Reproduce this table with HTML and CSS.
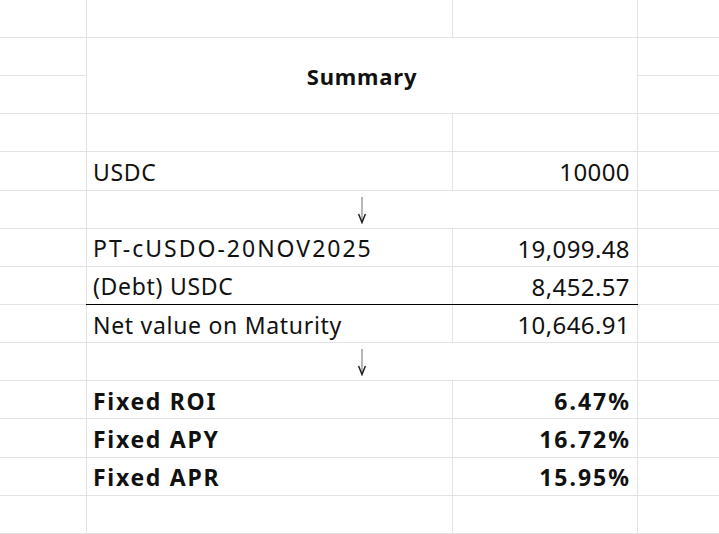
FILE: index.html
```html
<!DOCTYPE html>
<html lang="en">
<head>
<meta charset="utf-8">
<title>Summary</title>
<link rel="stylesheet" href="styles.css">
</head>
<body>
<div class="sheet">
  <!-- row 0 -->
  <div class="cell"></div><div class="cell"></div><div class="cell"></div><div class="cell"></div>
  <!-- rows 1-2 -->
  <div class="cell"></div>
  <div class="cell title span2">Summary</div>
  <div class="cell"></div>
  <div class="cell"></div>
  <div class="cell"></div>
  <!-- row 3 -->
  <div class="cell"></div><div class="cell"></div><div class="cell"></div><div class="cell"></div>
  <!-- row 4 -->
  <div class="cell"></div>
  <div class="cell label">USDC</div>
  <div class="cell num">10000</div>
  <div class="cell"></div>
  <!-- row 5 -->
  <div class="cell"></div>
  <div class="cell arrow wide"><svg width="10" height="27" viewBox="0 0 10 27"><line x1="5" y1="0" x2="5" y2="24" stroke="#999" stroke-width="1.4"/><path d="M1.6 17 L5 25.5 L8.4 17" fill="none" stroke="#222" stroke-width="1.5"/></svg></div>
  <div class="cell"></div>
  <!-- row 6 -->
  <div class="cell"></div>
  <div class="cell label code">PT-cUSDO-20NOV2025</div>
  <div class="cell num">19,099.48</div>
  <div class="cell"></div>
  <!-- row 7 -->
  <div class="cell"></div>
  <div class="cell label">(Debt) USDC</div>
  <div class="cell num">8,452.57</div>
  <div class="cell"></div>
  <!-- row 8 -->
  <div class="cell"></div>
  <div class="cell label ruled ruled-left">Net value on Maturity</div>
  <div class="cell num ruled ruled-right">10,646.91</div>
  <div class="cell"></div>
  <!-- row 9 -->
  <div class="cell"></div>
  <div class="cell arrow wide"><svg width="10" height="27" viewBox="0 0 10 27"><line x1="5" y1="0" x2="5" y2="24" stroke="#999" stroke-width="1.4"/><path d="M1.6 17 L5 25.5 L8.4 17" fill="none" stroke="#222" stroke-width="1.5"/></svg></div>
  <div class="cell"></div>
  <!-- row 10 -->
  <div class="cell"></div>
  <div class="cell label strong">Fixed ROI</div>
  <div class="cell num strong">6.47%</div>
  <div class="cell"></div>
  <!-- row 11 -->
  <div class="cell"></div>
  <div class="cell label strong">Fixed APY</div>
  <div class="cell num strong">16.72%</div>
  <div class="cell"></div>
  <!-- row 12 -->
  <div class="cell"></div>
  <div class="cell label strong">Fixed APR</div>
  <div class="cell num strong">15.95%</div>
  <div class="cell"></div>
  <!-- row 13 -->
  <div class="cell"></div><div class="cell"></div><div class="cell"></div><div class="cell"></div>
  <!-- row 14 -->
  <div class="cell"></div><div class="cell"></div><div class="cell"></div><div class="cell"></div>
</div>
</body>
</html>
```
FILE: styles.css
```css
html, body {
  margin: 0;
  padding: 0;
  overflow: hidden;
  background: #ffffff;
}

.sheet {
  display: grid;
  grid-template-columns: 86px 365px 184px 81px;
  grid-template-rows: 37px repeat(13, 37.15px) 1fr;
  gap: 1px;
  background: #e3e3e3;
  width: 719px;
  height: 534px;
  overflow: hidden;
  font-family: "Noto Sans", "DejaVu Sans", sans-serif;
  font-size: 23px;
  color: #111;
}

.cell {
  background: #ffffff;
  display: flex;
  align-items: center;
  padding: 0 6px;
  min-width: 0;
  min-height: 0;
  white-space: nowrap;
  position: relative;
}

.span2 {
  grid-row: span 2;
}

.title {
  grid-column: span 2;
  justify-content: center;
  font-weight: 700;
  font-size: 22px;
  letter-spacing: 0.8px;
  padding-top: 1px;
}

.wide {
  grid-column: span 2;
}

.arrow {
  justify-content: center;
  padding-top: 2px;
}

.label {
  letter-spacing: 0.7px;
  padding-top: 2px;
}

.code {
  letter-spacing: 2px;
}

.num {
  justify-content: flex-end;
  padding-right: 7px;
  padding-top: 2px;
  font-size: 24px;
  letter-spacing: 0.4px;
}

.strong {
  font-weight: 700;
  letter-spacing: 1.7px;
}

.num.strong {
  font-size: 23px;
  letter-spacing: 2px;
  padding-right: 6px;
}

.ruled::before {
  content: "";
  position: absolute;
  top: -1px;
  height: 1px;
  background: #000;
}

.ruled-left::before {
  left: -1px;
  right: -1px;
}

.ruled-right::before {
  left: 0;
  right: -1px;
}
```
